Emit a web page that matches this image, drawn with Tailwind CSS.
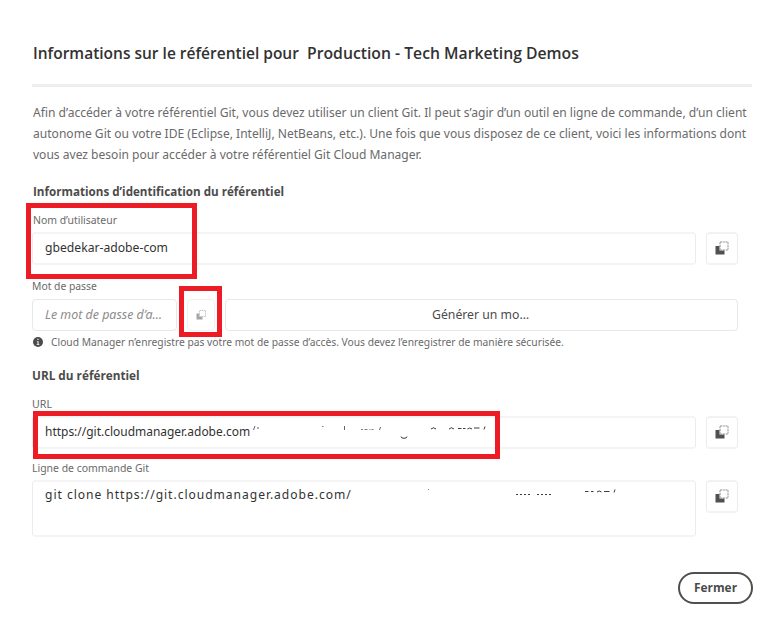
<!DOCTYPE html>
<html lang="fr">
<head>
<meta charset="utf-8">
<title>Informations sur le référentiel</title>
<script src="https://cdn.jsdelivr.net/npm/@tailwindcss/browser@4"></script>
</head>
<body class="relative h-[628px] w-[780px] overflow-hidden bg-white font-['Noto_Sans',sans-serif] text-[13px] text-[#6a6a6a]">
<svg class="hidden">
  <symbol id="copy" viewBox="0 0 16 16">
    <path d="M1.500 5H5.500V9.500H10.500V13.500H1.500z" fill="#505050"/>
    <rect x="6" y="1" width="8" height="8" fill="none" stroke="#8f8f8f" stroke-width="1" stroke-dasharray="2 .7"/>
  </symbol>
</svg>
<main class="flex w-[752px] flex-col pl-8 whitespace-nowrap">
  <h1 class="flex h-[84px] pt-[41px] pl-px text-[17px] leading-6 font-semibold text-[#323232] font-['Open_Sans',sans-serif]">
    <span class="w-[274px]"><span class="inline-block origin-left scale-x-[.912]">Informations sur le référentiel pour</span></span>
    <span class="inline-block origin-left scale-x-[.926]">Production - Tech Marketing Demos</span>
  </h1>
  <div class="h-[3px] bg-[#eeeeee]"></div>
  <div class="mt-[15px] flex flex-col items-start pl-px leading-[21px]">
    <span class="origin-left scale-x-[.929]">Afin d’accéder à votre référentiel Git, vous devez utiliser un client Git. Il peut s’agir d’un outil en ligne de commande, d’un client</span>
    <span class="origin-left scale-x-[.928]">autonome Git ou votre IDE (Eclipse, IntelliJ, NetBeans, etc.). Une fois que vous disposez de ce client, voici les informations dont</span>
    <span class="origin-left scale-x-[.927]">vous avez besoin pour accéder à votre référentiel Git Cloud Manager.</span>
  </div>

  <h2 class="mt-4 flex h-5 pl-px leading-5 font-bold text-[#4b4b4b] font-['Open_Sans',sans-serif]"><span class="origin-left scale-x-[.895]">Informations d’identification du référentiel</span></h2>
  <label class="mt-[11px] flex h-4 pl-px text-[11px] leading-4"><span class="origin-left scale-x-[.946]">Nom d’utilisateur</span></label>
  <div class="mt-1 flex gap-[10px]">
    <div class="flex h-[33px] w-[664px] items-center rounded border-x border-y-2 border-x-[#ececec] border-y-[#f4f4f4] pb-[2px] pl-3 text-[#323232]"><span class="origin-left scale-x-[.936]">gbedekar-adobe-com</span></div>
    <div class="flex h-[33px] w-8 items-center justify-center rounded border-x border-y-2 border-x-[#ececec] border-y-[#f2f2f2]"><svg class="size-4"><use href="#copy"/></svg></div>
  </div>

  <label class="mt-[13px] flex h-4 text-[11px] leading-4"><span class="origin-left scale-x-[.94]">Mot de passe</span></label>
  <div class="mt-[5px] flex">
    <div class="flex h-8 w-[145px] items-center rounded border border-[#e8e8e8] pl-3 text-[#8c8c8c] italic"><span class="origin-left scale-x-[.955]">Le mot de passe d’a…</span></div>
    <div class="ml-[10px] flex h-8 w-7 items-center justify-center rounded border border-[#f0f0f0]">
      <svg class="size-3" viewBox="0 0 12 12"><path d="M1.500 4.500H4.300V7.800H7.500V10.500H1.500z" fill="#a5a5a5"/><rect x="4.500" y="1.500" width="6" height="6" fill="none" stroke="#cacaca" stroke-dasharray="1.5 .5"/></svg>
    </div>
    <div class="ml-[10px] flex h-8 w-[513px] items-center justify-center rounded border border-[#e8e8e8] pr-[2px] text-[#4b4b4b]"><span class="scale-x-[.941]">Générer un mo…</span></div>
  </div>
  <div class="mt-[3px] flex h-4 items-center pl-px text-[11px] leading-4">
    <svg class="mr-2 size-[10px] shrink-0" viewBox="0 0 10 10"><circle cx="5" cy="5" r="5" fill="#4b4b4b"/><path d="M4.300 1.800h1.400v1.300H4.300zM3.800 4.200h1.900v2.800h.600v.9H3.700V7h.7V5.100h-.6z" fill="#ddd"/></svg>
    <span class="origin-left scale-x-[.934]">Cloud Manager n’enregistre pas votre mot de passe d’accès. Vous devez l’enregistrer de manière sécurisée.</span>
  </div>

  <h2 class="mt-[15px] flex h-5 leading-5 font-bold text-[#4b4b4b] font-['Open_Sans',sans-serif]"><span class="origin-left scale-x-[.905]">URL du référentiel</span></h2>
  <label class="mt-[11px] flex h-4 text-[11px] leading-4"><span class="origin-left scale-x-[.968]">URL</span></label>
  <div class="mt-1 flex gap-[10px]">
    <div class="flex h-[33px] w-[664px] items-center rounded border-x border-y-2 border-x-[#ececec] border-y-[#f4f4f4] pb-[2px] pl-3 text-[#323232]"><span class="origin-left scale-x-[.92]">https://git.cloudmanager.adobe.com</span></div>
    <div class="flex h-[33px] w-8 items-center justify-center rounded border-x border-y-2 border-x-[#ececec] border-y-[#f2f2f2]"><svg class="size-4"><use href="#copy"/></svg></div>
  </div>
  <label class="mt-[11px] flex h-4 text-[11px] leading-4"><span class="origin-left scale-x-[.95]">Ligne de commande Git</span></label>
  <div class="mt-1 flex gap-[10px]">
    <div class="flex h-[57px] w-[664px] rounded border-x border-y-2 border-x-[#ececec] border-y-[#f4f4f4] pt-[3px] pl-3 leading-[18px] text-[#323232]"><span class="origin-left scale-x-[.93] self-start tracking-[1.03px]">git clone https://git.cloudmanager.adobe.com/</span></div>
    <div class="flex h-[33px] w-8 items-center justify-center rounded border-x border-y-2 border-x-[#ececec] border-y-[#f2f2f2]"><svg class="size-4"><use href="#copy"/></svg></div>
  </div>
  <div class="mt-[35px] ml-[646px] flex h-8 w-[75px] items-center justify-center rounded-full border-2 border-[#4f4f4f] font-bold text-[#4b4b4b] font-['Open_Sans',sans-serif]"><span class="scale-x-[.913]">Fermer</span></div>
</main>

<!-- marks left over around the masked repository paths -->
<svg class="absolute top-[424px] left-[250px] h-[75px] w-[380px]" fill="none" stroke="#3c3c3c">
  <path d="M5 2 3.500 6M8 3v2M94.500 2v4M130.500 3l-1 3" stroke-opacity=".8"/>
  <path d="M72 2.500h1.500M111 5.500h2m1.500 0h3m2 0h1m1 0h2M178 65.500h1" stroke-opacity=".65"/>
  <path d="M151 12.500q0 1.800 3 1.800t3-1.800M181 5q2.500-2.500 5 0M199 5q2.500-2.500 5 0M208 4.500h3.500M213 4.500h2.500M217.500 5q2.200-2 4.500 0M224 4h5.500M235 2.500l-1 3"/>
  <path d="M335 67.500h3.500M341 67.500h2.500M347 68q2.200-2 4.500 0M354 67.500h5.500M365 65.500l-1 3"/>
  <path d="M266 70.500h15M287 70.500h15" stroke-dasharray="2 2"/>
</svg>

<div class="absolute top-[203px] left-[26px] h-[76px] w-[171px] border-5 border-[#ed1c24]"></div>
<div class="absolute top-[286px] left-[179px] h-[51px] w-[43px] border-5 border-[#ed1c24]"></div>
<div class="absolute top-[411px] left-[33px] h-12 w-[467px] border-5 border-[#ed1c24]"></div>
</body>
</html>
